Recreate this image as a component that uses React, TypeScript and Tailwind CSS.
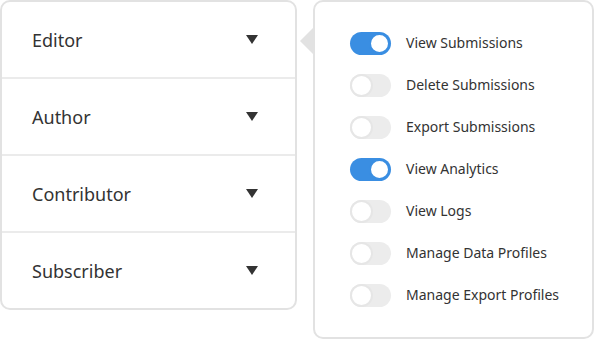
import React from "react";

const roles = ["Editor", "Author", "Contributor", "Subscriber"];
const perms: { label: string; on: boolean }[] = [
  { label: "View Submissions", on: true },
  { label: "Delete Submissions", on: false },
  { label: "Export Submissions", on: false },
  { label: "View Analytics", on: true },
  { label: "View Logs", on: false },
  { label: "Manage Data Profiles", on: false },
  { label: "Manage Export Profiles", on: false },
];

function Toggle({ on }: { on: boolean }) {
  return on ? (
    <div className="relative h-[23px] w-[41px] rounded-full bg-[#3a8ee2]">
      <div className="absolute right-[1px] top-[1px] h-[21px] w-[21px] rounded-full border-2 border-[#3a8ee2] bg-white" />
    </div>
  ) : (
    <div className="relative h-[23px] w-[41px] rounded-full bg-[#ececec]">
      <div className="absolute left-0 top-0 h-[23px] w-[23px] rounded-full border-2 border-[#e6e6e6] bg-white" />
    </div>
  );
}

export default function App() {
  return (
    <div
      className="flex h-[340px] w-[595px] items-start bg-white text-[#333333]"
      style={{ fontFamily: '"Noto Sans", "Open Sans", sans-serif' }}
    >
      <div className="flex h-[310px] w-[297px] flex-col overflow-hidden rounded-[10px] border-2 border-[#e2e2e2] bg-white">
        {roles.map((r, i) => (
          <React.Fragment key={r}>
            {i > 0 && <div className="h-[2px] shrink-0 bg-[#ebebeb]" />}
            <div className="flex h-[75px] shrink-0 items-center justify-between pl-[30px] pr-[37px]">
              <span className="text-[18px] leading-none">{r}</span>
              <svg width="12" height="9" viewBox="0 0 12 9">
                <polygon points="0,0 12,0 6,9" fill="#333333" />
              </svg>
            </div>
          </React.Fragment>
        ))}
      </div>
      <div className="relative ml-[16px] h-[339px] w-[281px] rounded-[10px] border-2 border-[#e2e2e2] bg-white pl-[35px] pt-[20px]">
        <svg
          className="absolute left-[-15px] top-[26px]"
          width="13"
          height="26"
          viewBox="0 0 13 26"
        >
          <polygon points="13,0 13,26 0,13" fill="#e2e2e2" />
        </svg>
        <div className="flex flex-col">
          {perms.map((p) => (
            <div key={p.label} className="flex h-[42px] items-center gap-[15px]">
              <Toggle on={p.on} />
              <span className="text-[14px] leading-none">{p.label}</span>
            </div>
          ))}
        </div>
      </div>
    </div>
  );
}
